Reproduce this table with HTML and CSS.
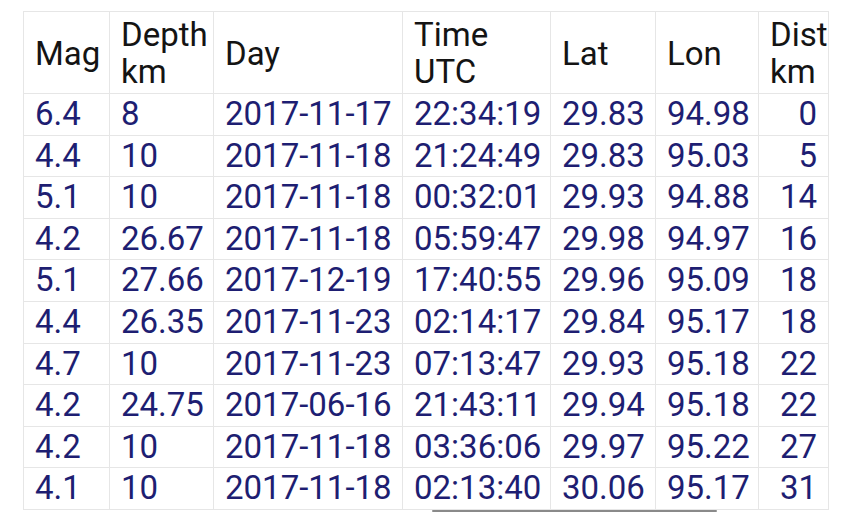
FILE: index.html
```html
<!DOCTYPE html>
<html>
<head>
<meta charset="utf-8">
<link rel="stylesheet" href="styles.css">
</head>
<body>
<div class="wrap">
<table class="quakes">
<colgroup>
<col class="c-mag"><col class="c-depth"><col class="c-day"><col class="c-time"><col class="c-lat"><col class="c-lon"><col class="c-dist">
</colgroup>
<thead>
<tr><th>Mag</th><th>Depth<br>km</th><th>Day</th><th>Time<br>UTC</th><th>Lat</th><th>Lon</th><th>Dist<br>km</th></tr>
</thead>
<tbody>
<tr><td>6.4</td><td>8</td><td>2017-11-17</td><td>22:34:19</td><td>29.83</td><td>94.98</td><td class="num">0</td></tr>
<tr><td>4.4</td><td>10</td><td>2017-11-18</td><td>21:24:49</td><td>29.83</td><td>95.03</td><td class="num">5</td></tr>
<tr><td>5.1</td><td>10</td><td>2017-11-18</td><td>00:32:01</td><td>29.93</td><td>94.88</td><td class="num">14</td></tr>
<tr><td>4.2</td><td>26.67</td><td>2017-11-18</td><td>05:59:47</td><td>29.98</td><td>94.97</td><td class="num">16</td></tr>
<tr><td>5.1</td><td>27.66</td><td>2017-12-19</td><td>17:40:55</td><td>29.96</td><td>95.09</td><td class="num">18</td></tr>
<tr><td>4.4</td><td>26.35</td><td>2017-11-23</td><td>02:14:17</td><td>29.84</td><td>95.17</td><td class="num">18</td></tr>
<tr><td>4.7</td><td>10</td><td>2017-11-23</td><td>07:13:47</td><td>29.93</td><td>95.18</td><td class="num">22</td></tr>
<tr><td>4.2</td><td>24.75</td><td>2017-06-16</td><td>21:43:11</td><td>29.94</td><td>95.18</td><td class="num">22</td></tr>
<tr><td>4.2</td><td>10</td><td>2017-11-18</td><td>03:36:06</td><td>29.97</td><td>95.22</td><td class="num">27</td></tr>
<tr><td>4.1</td><td>10</td><td>2017-11-18</td><td>02:13:40</td><td>30.06</td><td>95.17</td><td class="num">31</td></tr>
</tbody>
</table>
<div class="scrollbar"></div>
</div>
</body>
</html>
```
FILE: styles.css
```css
html, body {
  margin: 0;
  padding: 0;
  background: #ffffff;
}
body {
  padding: 11px 0 0 23px;
  font-family: Roboto, "Noto Sans", sans-serif;
}
.quakes {
  border-collapse: collapse;
  table-layout: fixed;
  width: 805px;
  font-size: 33px;
}
.c-mag { width: 86px; }
.c-depth { width: 104px; }
.c-day { width: 189px; }
.c-time { width: 148px; }
.c-lat { width: 105px; }
.c-lon { width: 103px; }
.c-dist { width: 70px; }
.quakes th, .quakes td {
  border: 1px solid #e6e6e6;
  text-align: left;
  white-space: nowrap;
}
.quakes th {
  font-weight: 400;
  color: #141414;
  line-height: 37px;
  padding: 4px 10px 3px 11px;
  vertical-align: middle;
}
.quakes td {
  color: #1e1e72;
  line-height: 40.6px;
  padding: 0 10px 0 11px;
}
.quakes td.num {
  text-align: right;
  padding-right: 11px;
}
.scrollbar {
  margin-left: 409px;
  margin-top: 0;
  width: 285px;
  height: 2px;
  background: #8a8a8a;
  border-radius: 1px;
}
```
